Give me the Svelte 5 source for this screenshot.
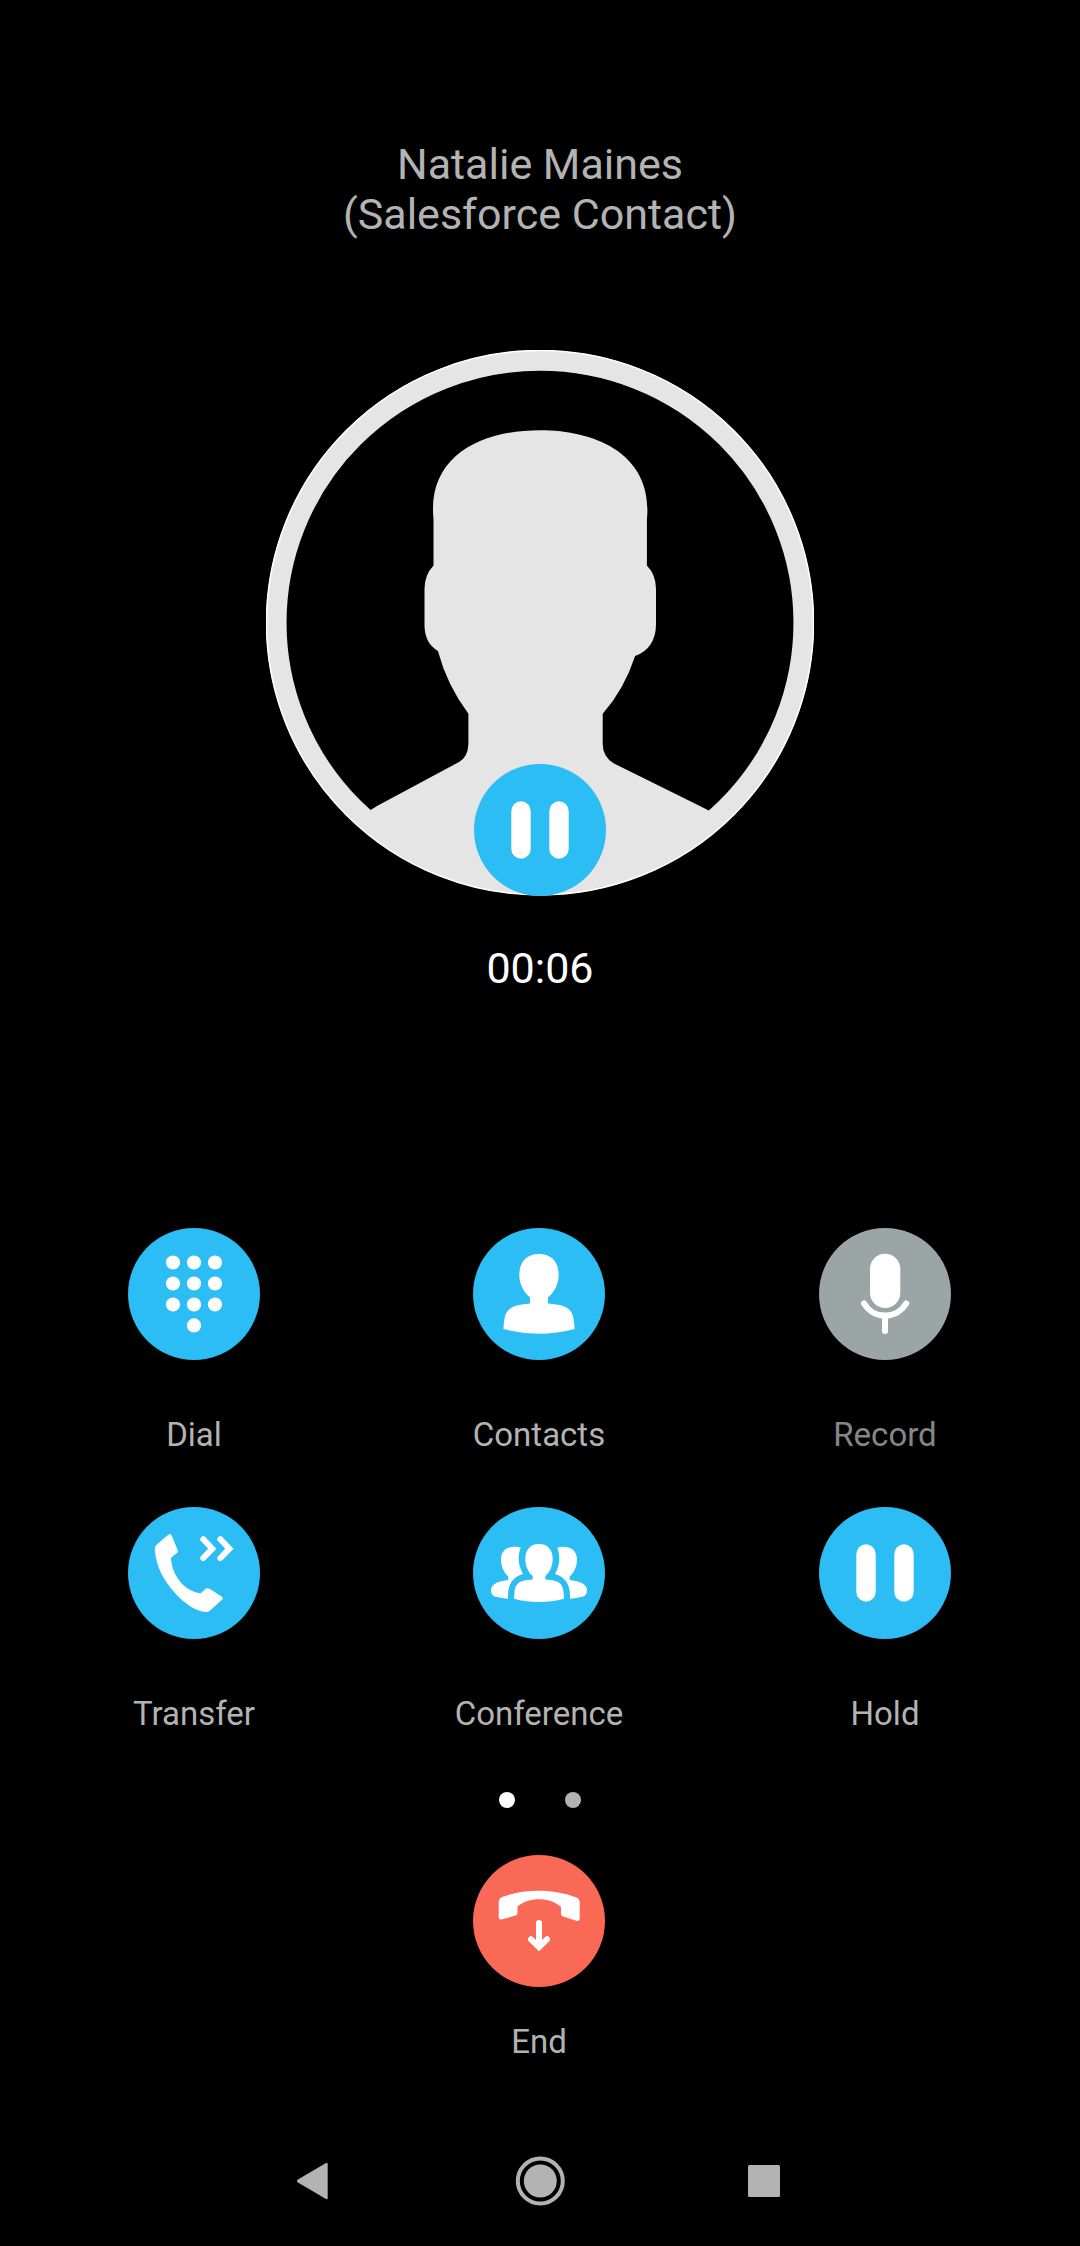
<script>
  const actions = [
    { id: 'dial', label: 'Dial' },
    { id: 'contacts', label: 'Contacts' },
    { id: 'record', label: 'Record', disabled: true },
    { id: 'transfer', label: 'Transfer' },
    { id: 'conference', label: 'Conference' },
    { id: 'hold', label: 'Hold' },
  ];
  const dialDots = [
    [45, 34.5], [66, 34.5], [87, 34.5],
    [45, 55.5], [66, 55.5], [87, 55.5],
    [45, 76.5], [66, 76.5], [87, 76.5],
    [66, 97.4],
  ];
</script>

{#snippet pause()}
  <rect x="37.3" y="37.3" width="19.4" height="57.4" rx="9.7" />
  <rect x="75.3" y="37.3" width="19.4" height="57.4" rx="9.7" />
{/snippet}

{#snippet sidePerson()}
  <path d="M47.7 40.7C46 39.9 44 39.7 41.5 39.7C33 39.7 28 44.5 28 52.5C28 59.5 31 65.5 35.3 69.5V73C31 74 27.5 74 23.7 75.7C20 77.5 18 80 18 83.5C18 87 19.5 89 22.7 89.7C27 90.6 31 91.2 35 91.7C35 88 35 84.5 35.8 81.5C37.5 74 42 69.5 50 67C47 61.5 45.7 57 45.7 51.5C45.7 47.5 46.3 44 47.7 40.7Z" />
{/snippet}

<main class="screen">
  <header class="caller">
    <div>Natalie Maines</div>
    <div>(Salesforce Contact)</div>
  </header>

  <div class="portrait">
    <svg class="avatar" viewBox="266 350 548 546" aria-hidden="true">
      <clipPath id="disc"><ellipse cx="540" cy="622.7" rx="273" ry="272" /></clipPath>
      <ellipse class="ring" cx="540" cy="622.7" rx="263.7" ry="262.2" />
      <path
        class="person"
        clip-path="url(#disc)"
        d="M540 430.2C485 430.2 433 453 433 509Q433 515 433.5 519V565.5Q424.5 575 424.5 589V625Q424.5 643 437.9 651Q447 685 468.4 713.8V744Q468 757 459 762L377 806L370.6 810L340 800L300 896H780L740 800L708.7 810.5L699.4 805.7L614 763.5Q602.7 757 602.7 744V713.8Q624 690 635.1 656.1Q656 648 656 624V589Q656 575 646.9 565.5V519Q647.4 515 647.4 509C647 453 595 430.2 540 430.2Z"
      />
      <ellipse class="edge" cx="540" cy="622.7" rx="273.5" ry="272.2" />
    </svg>
    <svg class="badge" viewBox="0 0 132 132" aria-label="On hold">
      <circle class="blue" cx="66" cy="66" r="66" />
      <g class="glyph">{@render pause()}</g>
    </svg>
  </div>

  <div class="timer">00:06</div>

  <section class="actions">
    {#each actions as action (action.id)}
      <div class="action" class:disabled={action.disabled}>
        <svg class="icon" viewBox="0 0 132 132" aria-hidden="true">
          <circle class="disc" cx="66" cy="66" r="66" />
          <g class="glyph">
            {#if action.id === 'dial'}
              {#each dialDots as [x, y]}
                <circle cx={x} cy={y} r="7.1" />
              {/each}
            {:else if action.id === 'contacts'}
              <path d="M66 26C53.5 26 46.3 34 46.3 47C46.3 56 50.5 64 57 69.5V75.5C51 76 46.5 76.5 42 78C35 80.5 31.8 85.5 31.3 92L30.3 101Q48 105.7 66 105.7Q84 105.7 101.7 101L100.7 92C100.2 85.5 97 80.5 90 78C85.5 76.5 81 76 75 75.5V69.5C81.5 64 85.7 56 85.7 47C85.7 34 78.5 26 66 26Z" />
            {:else if action.id === 'record'}
              <rect x="51" y="25.7" width="30.3" height="54.3" rx="15.15" />
              <path class="line" d="M45 75.5A24.5 24.5 0 0 0 87.2 75.5M66 89V103" />
            {:else if action.id === 'transfer'}
              <path d="M40.5 27.5Q42.7 26 43.7 28.5L49.8 43.5Q50.2 45 49 46L43 50.7C43.5 67 55 83.5 72.7 86.3L77.5 82Q79.5 80.5 81.5 81.7L93.5 89.5Q95.7 91 94 92.8L82 103.5Q80.5 105 78 105C67 104.5 55 95 47 86C35 72.5 28 59 26.8 42.5Q26.6 39.5 28.5 37.8Z" />
              <path class="line" d="M75.3 32.3L84.3 41.7L75.3 51M92.4 32.3L101.4 41.7L92.4 51" />
            {:else if action.id === 'conference'}
              <path d="M66 37C57 37 52.3 43 52.3 52C52.3 59.5 55.5 65.5 59.7 69V72.5C56 73 52 72.9 48.7 74.2C43.5 76 41.8 80.5 41.5 85L41 91.7Q53 95 66 95Q79 95 91 91.7L90.5 85C90.2 80.5 88.5 76 83.3 74.2C80 72.9 76 73 72.3 72.5V69C76.5 65.5 79.7 59.5 79.7 52C79.7 43 75 37 66 37Z" />
              {@render sidePerson()}
              <g transform="matrix(-1 0 0 1 132 0)">{@render sidePerson()}</g>
            {:else}
              {@render pause()}
            {/if}
          </g>
        </svg>
        <span class="label">{action.label}</span>
      </div>
    {/each}
  </section>

  <div class="pager">
    <i class="dot current"></i>
    <i class="dot"></i>
  </div>

  <div class="end">
    <svg class="icon" viewBox="0 0 132 132" aria-hidden="true">
      <circle class="red" cx="66" cy="66" r="66" />
      <g class="glyph">
        <path d="M25.7 47Q25.8 43.5 29 42C41 37.5 53 35.7 66 35.7C79 35.7 92 38 103.5 42.5Q106.7 44 106.7 47V64Q106.5 66.5 104 66L90 61.5Q88 60.8 88 59V52C81.5 46.5 74 44.3 66 44.3C58 44.3 50.5 46.3 44.5 51.5V58Q44.5 60 42.5 60.6L28.5 64.5Q25.7 65 25.7 62.5Z" />
        <path class="line" d="M66 68V91M58 84.3L66 92L74 84.3" />
      </g>
    </svg>
    <span class="label">End</span>
  </div>

  <nav class="system">
    <svg width="32" height="38" viewBox="0 0 32 38" aria-label="Back">
      <path d="M1.5 17.8L30 .9Q31.7 .3 31.7 2V36Q31.7 37.7 30 37L1.5 20.2Q.2 19 1.5 17.8Z" />
    </svg>
    <svg class="home" width="50" height="50" viewBox="0 0 50 50" aria-label="Home">
      <circle class="halo" cx="25.3" cy="25" r="22.5" />
      <circle cx="25.3" cy="25" r="16.5" />
    </svg>
    <svg width="32" height="32" viewBox="0 0 32 32" aria-label="Recents">
      <rect width="32" height="32" rx="1.5" />
    </svg>
  </nav>
</main>

<style>
  :global(body) {
    background: #000;
  }
  .screen {
    box-sizing: border-box;
    width: 1080px;
    height: 2246px;
    padding-top: 139px;
    overflow: hidden;
    display: flex;
    flex-direction: column;
    align-items: center;
    background: #000;
    color: #b3b3b3;
    font-family: Roboto, sans-serif;
  }
  svg {
    display: block;
  }
  .caller {
    font-size: 43px;
    line-height: 50px;
    text-align: center;
  }
  .portrait {
    position: relative;
    width: 548px;
    height: 546px;
    margin-top: 111px;
  }
  .avatar {
    width: 548px;
    height: 546px;
  }
  .ring {
    fill: none;
    stroke: #e5e5e5;
    stroke-width: 20.5px;
  }
  .person {
    fill: #e5e5e5;
  }
  .edge {
    fill: none;
    stroke: #fff;
    stroke-width: 1.5px;
  }
  .badge {
    position: absolute;
    left: 208px;
    bottom: 0;
    width: 132px;
    height: 132px;
  }
  .blue,
  .disc {
    fill: #2cbdf5;
  }
  .red {
    fill: #fa6956;
  }
  .glyph {
    fill: #fff;
  }
  .line {
    fill: none;
    stroke: #fff;
    stroke-width: 6px;
    stroke-linecap: round;
  }
  .timer {
    margin-top: 47px;
    color: #fff;
    font-size: 43px;
    line-height: 50px;
  }
  .actions {
    display: grid;
    grid-template-columns: 346px 344px 348px;
    row-gap: 52px;
    margin-top: 235px;
  }
  .action,
  .end {
    display: flex;
    flex-direction: column;
    align-items: center;
  }
  .icon {
    width: 132px;
    height: 132px;
  }
  .label {
    margin-top: 55px;
    font-size: 33px;
    line-height: 40px;
  }
  .disabled {
    color: #868686;
  }
  .disabled .disc {
    fill: #9ca5a6;
  }
  .pager {
    display: flex;
    gap: 50px;
    margin-top: 58px;
  }
  .dot {
    width: 16px;
    height: 16px;
    border-radius: 50%;
    background: #b3b3b1;
  }
  .current {
    background: #fff;
  }
  .end {
    width: 346px;
    margin-top: 47px;
    margin-right: 2px;
  }
  .end .label {
    margin-top: 35px;
  }
  .system {
    display: flex;
    align-items: center;
    justify-content: space-between;
    width: 484px;
    margin-top: 94px;
    margin-right: 4px;
    fill: #b3b3b3;
  }
  .home {
    margin-left: 4px;
  }
  .halo {
    fill: none;
    stroke: #b3b3b3;
    stroke-width: 4px;
  }
</style>
